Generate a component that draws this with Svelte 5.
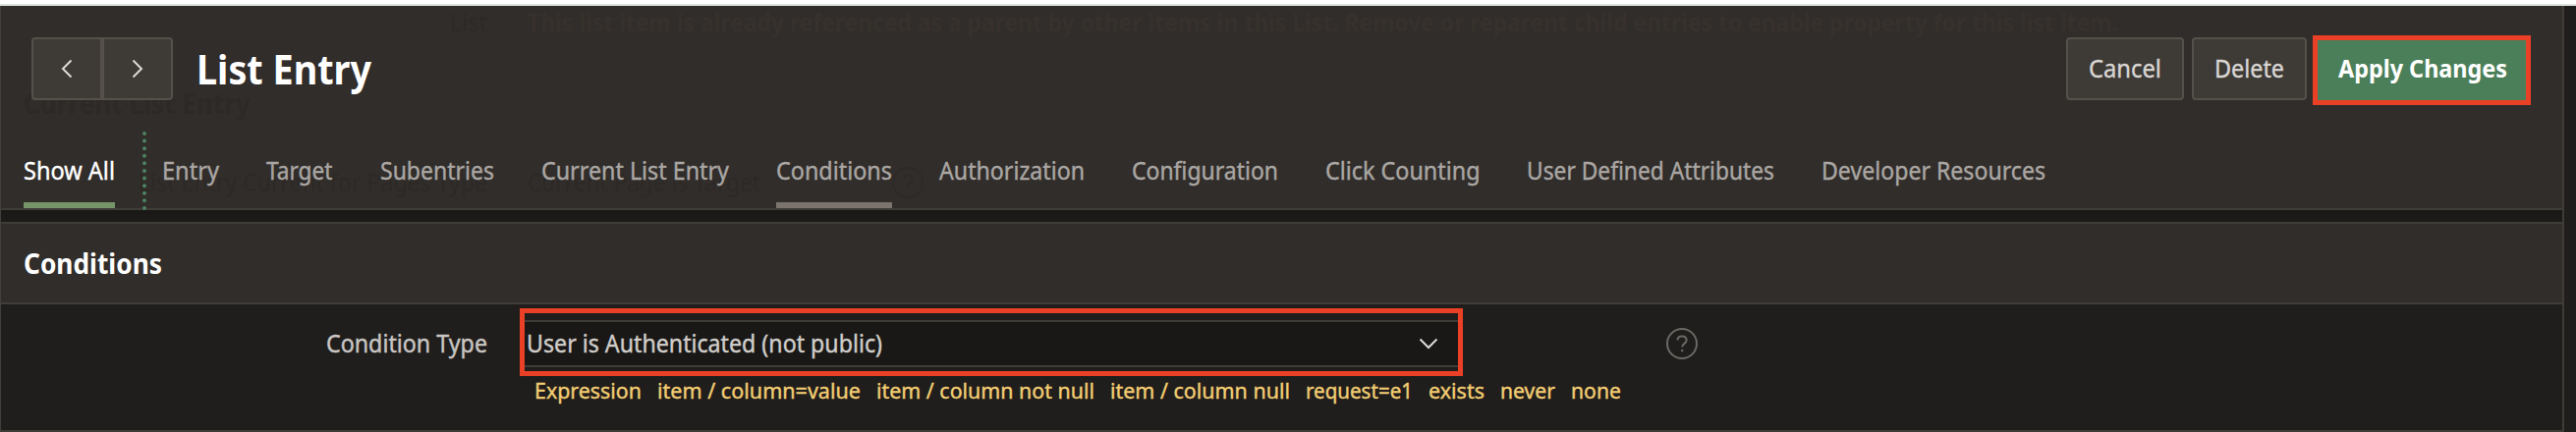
<script>
  const tabs = [
    { label: 'Entry', w: 58 },
    { label: 'Target', w: 67.5 },
    { label: 'Subentries', w: 116 },
    { label: 'Current List Entry', w: 191 },
    { label: 'Conditions', w: 118, near: true },
    { label: 'Authorization', w: 148 },
    { label: 'Configuration', w: 149 },
    { label: 'Click Counting', w: 157.5 },
    { label: 'User Defined Attributes', w: 252 },
    { label: 'Developer Resources', w: 228 }
  ];
  const shortcuts = [
    { label: 'Expression', w: 109 },
    { label: 'item / column=value', w: 207 },
    { label: 'item / column not null', w: 222 },
    { label: 'item / column null', w: 183 },
    { label: 'request=e1', w: 109 },
    { label: 'exists', w: 57 },
    { label: 'never', w: 56 },
    { label: 'none', w: 51 }
  ];

  // Condenses a label horizontally so that it fills the given width.
  function fit(node, width) {
    const natural = node.getBoundingClientRect().width;
    node.style.width = width + 'px';
    node.style.transform = `scaleX(${width / natural})`;
  }
</script>

<div class="page">
  <div class="strip"></div>
  <div class="panel">
    <header>
      <div class="ghosts" aria-hidden="true">
        <span class="ghost" style:left="458px" style:top="7px"><span class="fit" use:fit={38}>List</span></span>
        <span class="ghost b" style:left="537px" style:top="7px"><span class="fit" use:fit={1619}>This list item is already referenced as a parent by other items in this List. Remove or reparent child entries to enable property for this list item.</span></span>
        <span class="ghost h" style:left="24px" style:top="87px"><span class="fit" use:fit={231}>Current List Entry</span></span>
        <span class="ghost" style:left="141px" style:top="170px"><span class="fit" use:fit={355}>List Entry Current for Pages Type</span></span>
        <span class="ghost" style:left="537px" style:top="170px"><span class="fit" use:fit={237}>Current Page is Target</span></span>
        <svg class="ghost-help" width="32" height="32" viewBox="0 0 32 32">
          <circle cx="16" cy="16" r="15" />
          <path d="M11.5 12.5c0-2.6 2-4 4.6-4s4.5 1.6 4.5 3.9c0 3.6-4.4 3.3-4.4 7.1" />
        </svg>
      </div>
      <div class="top">
        <div class="pager">
          <button aria-label="Previous"><svg width="12" height="20" viewBox="0 0 12 20"><path d="M10.5 1.5 2 10l8.5 8.5" /></svg></button>
          <button aria-label="Next"><svg width="12" height="20" viewBox="0 0 12 20"><path d="M1.5 1.5 10 10l-8.5 8.5" /></svg></button>
        </div>
        <h1><span class="fit" use:fit={178}>List Entry</span></h1>
        <div class="actions">
          <button class="btn cancel"><span class="fit" use:fit={74}>Cancel</span></button>
          <button class="btn delete"><span class="fit" use:fit={71}>Delete</span></button>
          <button class="apply"><span class="fit" use:fit={172}>Apply Changes</span></button>
        </div>
      </div>
      <nav>
        <span class="tab all"><span class="fit" use:fit={93}>Show All</span></span>
        <div class="rest">
          {#each tabs as t}
            <span class="tab" class:near={t.near}><span class="fit" use:fit={t.w}>{t.label}</span></span>
          {/each}
        </div>
      </nav>
    </header>
    <div class="gap"></div>
    <h2><span class="fit" use:fit={141}>Conditions</span></h2>
    <section>
      <div class="row">
        <div class="label"><span class="fit" use:fit={164}>Condition Type</span></div>
        <div class="mark">
          <div class="select">
            <span class="fit" use:fit={362}>User is Authenticated (not public)</span>
            <svg width="20" height="12" viewBox="0 0 20 12"><path d="M1.5 1.5 10 10l8.5-8.5" /></svg>
          </div>
        </div>
        <svg class="help" width="32" height="32" viewBox="0 0 32 32">
          <circle cx="16" cy="16" r="15" />
          <path d="M11.5 12.5c0-2.6 2-4 4.6-4s4.5 1.6 4.5 3.9c0 3.6-4.4 3.3-4.4 7.1" />
          <rect x="15.1" y="22" width="2.2" height="2.2" />
        </svg>
      </div>
      <div class="links">
        {#each shortcuts as s}
          <span class="fit" use:fit={s.w}>{s.label}</span>
        {/each}
      </div>
    </section>
  </div>
</div>

<style>
  .page {
    width: 2622px;
    height: 440px;
    box-sizing: border-box;
    overflow: hidden;
    background: #201e1c;
    border-top: 4px solid #fff;
    font-family: 'Noto Sans', sans-serif;
    font-size: 24.5px;
    line-height: 32px;
    color: #a9a6a3;
  }
  .strip { height: 2px; background: #dfe3df; }
  .panel {
    width: 2610px;
    height: 434px;
    box-sizing: border-box;
    border-left: 1px solid #43403c;
    border-right: 2px solid #3f3c37;
    border-bottom: 2px solid #3f3b37;
  }
  .fit { display: inline-block; white-space: nowrap; transform-origin: 0 50%; }
  .tab, .btn, .label, .select, .links { -webkit-text-stroke: 0.4px currentColor; }
  header {
    position: relative;
    height: 208px;
    box-sizing: border-box;
    background: #312d2a;
    border-bottom: 2px solid #403c38;
  }
  .ghosts { position: absolute; left: -1px; top: -6px; }
  .ghost { position: absolute; color: #2d2926; }
  .ghost.b { font-weight: 700; color: #37312d; }
  .ghost.h { font-weight: 700; font-size: 28px; line-height: 36px; }
  .ghosts .ghost-help { position: absolute; left: 908px; top: 170px; stroke: #2e2a27; }
  .top {
    position: relative;
    display: flex;
    height: 128px;
    padding: 30px 32px 0 31px;
    box-sizing: border-box;
    align-items: flex-start;
  }
  button {
    font: inherit;
    margin: 0;
    padding: 0;
    box-sizing: border-box;
    height: 64px;
    color: #d8d5d2;
  }
  .pager { margin-top: 2px; display: flex; }
  .pager button {
    width: 72px;
    background: #3e3a36;
    border: 2px solid #55504a;
    display: flex;
    align-items: center;
    justify-content: center;
  }
  .pager button:first-child { border-radius: 4px 0 0 4px; }
  .pager button:last-child { border-radius: 0 4px 4px 0; }
  svg { display: block; fill: none; stroke: #dcd9d6; stroke-width: 2; }
  h1 {
    margin: 6px 0 0 24px;
    font-size: 41px;
    line-height: 56px;
    color: #fff;
  }
  .actions { margin-left: auto; display: flex; }
  .btn {
    margin: 2px 8px 0 0;
    background: #3e3a36;
    border: 2px solid #55504a;
    border-radius: 4px;
  }
  .cancel { width: 120px; }
  .delete { width: 117px; margin-right: 6px; }
  .apply {
    width: 222px;
    height: 71px;
    padding: 0 0 3px 2px;
    border: 5px solid #ea4025;
    background: #4b7f5a;
    color: #fff;
    font-weight: 700;
  }
  nav { position: relative; display: flex; height: 78px; padding-left: 23px; }
  .tab { box-sizing: border-box; height: 78px; padding-top: 24px; border-bottom: 6px solid transparent; }
  .all { color: #fff; border-color: #769669; margin-right: 28px; }
  .near { border-color: #7b736d; }
  .rest {
    display: flex;
    gap: 48px;
    height: 80px;
    border-left: 4px dotted #4d8260;
    padding-left: 16px;
  }
  .gap { height: 12px; background: linear-gradient(#191816, #1d1c1a); }
  h2 {
    margin: 0;
    height: 84px;
    box-sizing: border-box;
    background: #312d2a;
    border: solid #403c38;
    border-width: 2px 0;
    padding: 20px 0 0 23px;
    font-size: 28px;
    line-height: 40px;
    color: #fff;
  }
  .row { display: flex; padding-top: 4px; }
  .label { width: 495px; text-align: right; padding-top: 20px; color: #c9c6c3; }
  .mark {
    box-sizing: border-box;
    width: 960px;
    height: 69px;
    margin-left: 33px;
    border: 5px solid #ea4025;
    padding: 7px 0;
  }
  .select {
    box-sizing: border-box;
    height: 48px;
    background: #191816;
    border: solid #3f3c37;
    border-width: 2px 0;
    padding: 0 20px 0 2px;
    display: flex;
    align-items: center;
    justify-content: space-between;
    color: #d0cdca;
  }
  .help { margin: 20px 0 0 207px; stroke: #6b6864; }
  .help rect { fill: #6b6864; stroke: none; }
  .links {
    display: flex;
    gap: 16px;
    padding: 0 0 0 542.5px;
    font-size: 22.5px;
    line-height: 30px;
    color: #f2cd73;
  }
</style>
